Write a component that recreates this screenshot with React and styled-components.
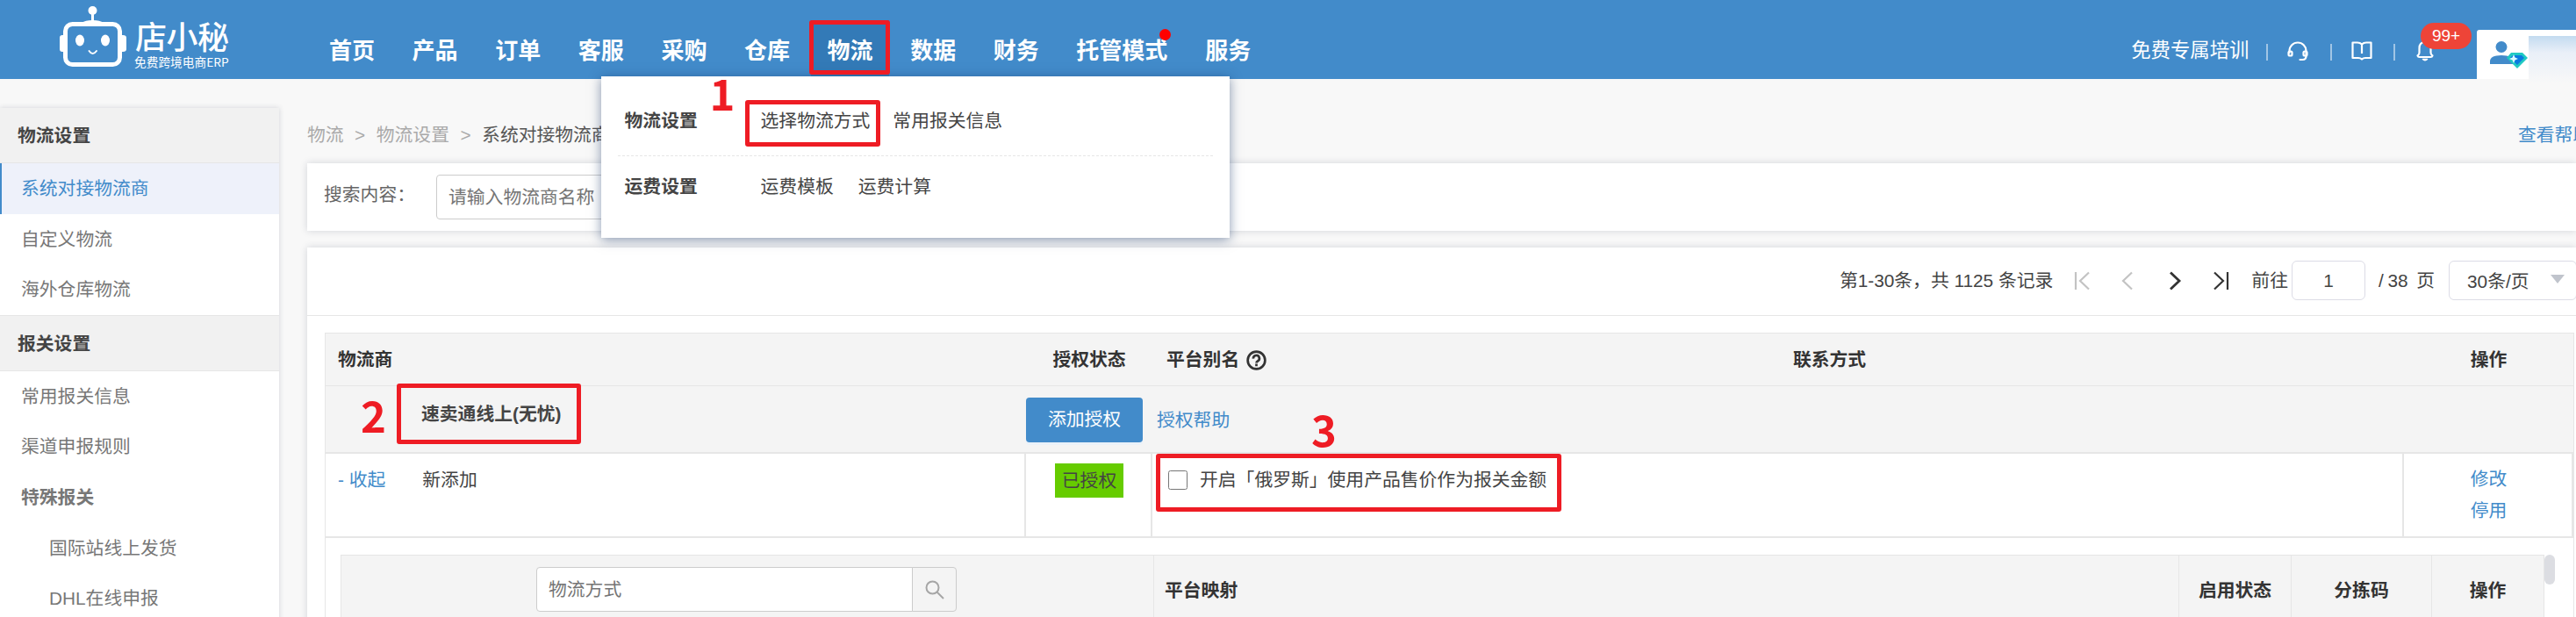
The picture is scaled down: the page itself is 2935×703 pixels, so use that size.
import React, { useState } from 'react';
import styled, { createGlobalStyle, css } from 'styled-components';

const GlobalStyle = createGlobalStyle`
  * {
    box-sizing: border-box;
  }

  body {
    margin: 0;
    background: #f8f8f8;
    overflow: hidden;
  }

  input, button {
    font: inherit;
  }
`;

const Page = styled.div`
  width: 2935px;
  height: 703px;
  overflow: hidden;
  background: #f8f8f8;
  color: #444;
  font-family: 'Liberation Sans', 'Noto Sans CJK SC', sans-serif;
  font-size: 20.8px;
  line-height: 30px;
  white-space: nowrap;
`;

/* red marks drawn over the screens of the guide */
const marked = css`
  &::after {
    content: '';
    position: absolute;
    inset: ${({ $inset }) => $inset};
    border: 5px solid #ee1c24;
    border-radius: 3px;
    pointer-events: none;
    z-index: 5;
  }
`;

const StepNumber = styled.span`
  position: absolute;
  left: ${({ $left }) => $left}px;
  top: ${({ $top }) => $top}px;
  color: #ee1c24;
  font-family: 'Noto Sans CJK SC', sans-serif;
  font-size: 49px;
  font-weight: 700;
  line-height: 50px;
  z-index: 6;
`;

const Header = styled.header`
  display: flex;
  height: 90px;
  padding-left: 66px;
  background: #428bca;
  color: #fff;
`;

const Logo = styled.div`
  display: flex;
  width: 288px;
  padding-top: 6px;
`;

const LogoText = styled.div`
  display: flex;
  flex-direction: column;
  margin-left: 8px;
  padding-top: 12px;
  font-family: 'Noto Sans CJK SC', sans-serif;
`;

const LogoName = styled.span`
  margin-left: 1px;
  font-size: 36px;
  font-weight: 500;
  line-height: 44px;
  letter-spacing: -0.5px;
`;

const LogoSlogan = styled.span`
  margin-top: -1px;
  font-size: 13.7px;
  line-height: 18px;
`;

const Nav = styled.nav`
  display: flex;
  height: 64px;
  margin-top: 23px;
`;

const NavItem = styled.div`
  position: relative;
  width: ${({ $wide }) => ($wide ? 147 : 94.6)}px;
  padding-left: 21px;
  font-size: 26px;
  font-weight: 700;
  line-height: 70px;
`;

const ActiveNavItem = styled(NavItem)`
  background: linear-gradient(#337ab7, #337ab7) 2px 0 / 89px 64px no-repeat;
  ${marked}
`;

const Dot = styled.i`
  position: absolute;
  top: 10px;
  right: 18px;
  width: 13px;
  height: 13px;
  border-radius: 50%;
  background: #f00;
`;

const Dropdown = styled.div`
  position: absolute;
  top: 64px;
  left: -237px;
  width: 716px;
  height: 184px;
  padding: 13px 19px 0;
  background: #fff;
  box-shadow: 0 2px 12px rgba(20, 50, 100, 0.5);
  color: #444;
  font-size: 20.8px;
  font-weight: 400;
  line-height: 75px;
  z-index: 4;
`;

const MenuRow = styled.div`
  display: flex;
  height: ${({ $last }) => ($last ? 70 : 78)}px;
  padding-left: 8px;
  border-bottom: ${({ $last }) => ($last ? 'none' : '1px dashed #e6e6e6')};
  line-height: ${({ $last }) => ($last ? 70 : 75)}px;
`;

const MenuTitle = styled.strong`
  width: 155px;
`;

const MenuLink = styled.span`
  position: relative;
  margin-right: ${({ $gap }) => $gap || 28}px;
  ${({ $inset }) => $inset && marked}
`;

const HeaderTools = styled.div`
  display: flex;
  align-items: center;
  margin-left: auto;
  padding-top: 25px;
  height: 90px;
  font-size: 22.4px;
`;

const Training = styled.span`
  margin-right: -5px;
`;

const Separator = styled.i`
  width: 2px;
  height: 19px;
  margin: 3px 22px 0 24.5px;
  background: rgba(255, 255, 255, 0.5);
`;

const BellBox = styled.span`
  position: relative;
  display: flex;
  width: 71px;
`;

const Badge = styled.span`
  position: absolute;
  left: 7px;
  top: -20px;
  width: 58px;
  height: 30px;
  border-radius: 15px;
  background: #ee4438;
  font-size: 19px;
  line-height: 30px;
  text-align: center;
`;

const Account = styled.div`
  display: flex;
  align-items: flex-start;
  width: 113px;
  height: 56px;
  margin-top: 34px;
  padding: 11px 0 0 14px;
  border-radius: 3px 0 0 0;
  background: #fff;
`;

const HiddenName = styled.div`
  flex: 1;
  height: 54px;
  margin-top: -4px;
  background: linear-gradient(#c3dbf0, #e9eff8 35%, #f8f8f8);
`;

const Body = styled.div`
  display: flex;
  align-items: flex-start;
`;

const Sidebar = styled.aside`
  width: 318px;
  height: 600px;
  margin-top: 33px;
  background: #fff;
  box-shadow: 0 0 6px rgba(40, 50, 80, 0.18);
`;

const SidebarTitle = styled.div`
  height: ${({ $first }) => ($first ? 63 : 64)}px;
  padding-left: 20px;
  border-top: ${({ $first }) => ($first ? 'none' : '1px solid #e6e6e6')};
  border-bottom: 1px solid #e6e6e6;
  background: #f1f1f1;
  font-weight: 700;
  line-height: 63px;
`;

const SidebarItem = styled.div`
  height: 57.6px;
  padding-left: ${({ $nested }) => ($nested ? 54 : 22)}px;
  border-left: 2px solid ${({ $active }) => ($active ? '#428bca' : 'transparent')};
  background: ${({ $active }) => ($active ? '#eef1fa' : 'none')};
  color: ${({ $active }) => ($active ? '#428bca' : '#777')};
  font-weight: ${({ $bold }) => ($bold ? 700 : 400)};
  line-height: 58px;
`;

const Main = styled.main`
  width: 2585px;
  margin-left: 32px;
`;

const Breadcrumb = styled.div`
  display: flex;
  gap: 12.5px;
  height: 96px;
  color: #aaa;
  line-height: 128px;
`;

const Current = styled.span`
  color: #555;
`;

const HelpLink = styled.a`
  width: 66px;
  margin-left: auto;
  color: #428bca;
`;

const Card = styled.section`
  background: #fff;
  box-shadow: 0 0 8px rgba(40, 50, 80, 0.18);
`;

const SearchCard = styled(Card)`
  display: flex;
  height: 77px;
  padding: 13px 20px 13px 19px;
  line-height: 45px;
  color: #666;
`;

const SearchLabel = styled.label`
  width: 128px;
`;

const SearchInput = styled.input`
  width: 420px;
  height: 51px;
  padding: 0 13px;
  border: 1px solid #ccc;
  border-radius: 4px;

  &::placeholder {
    color: #757575;
  }
`;

const ListCard = styled(Card)`
  height: 430px;
  margin-top: 19px;
`;

const Pager = styled.div`
  display: flex;
  align-items: center;
  justify-content: flex-end;
  height: 78px;
  padding-bottom: 2px;
  border-bottom: 1px solid #e6e6e6;
`;

const PagerIcon = styled.svg`
  width: 20px;
  height: 22px;
  margin-left: ${({ $first }) => ($first ? 23 : 0)}px;
  margin-right: ${({ $gap }) => $gap}px;
  fill: none;
  stroke: ${({ $disabled }) => ($disabled ? '#c3c3c3' : '#333')};
  stroke-width: 2.2;
`;

const PageInput = styled.input`
  width: 84px;
  height: 45px;
  margin: 0 15px 0 4px;
  border: 1px solid #dcdce6;
  border-radius: 6px;
  color: #444;
  text-align: center;
`;

const PageTotal = styled.span`
  word-spacing: -1px;
`;

const PageSize = styled.div`
  display: flex;
  align-items: center;
  justify-content: space-between;
  width: 146px;
  height: 45px;
  margin: 0 -1px 0 16px;
  padding: 3px 13px 0 20px;
  border: 1px solid #dcdce6;
  border-radius: 6px;
`;

const Caret = styled.i`
  margin-top: -6px;
  border: 8px solid transparent;
  border-top: 10px solid #c0c4cc;
  border-bottom: 0;
`;

const Table = styled.div`
  width: 2563px;
  height: 340px;
  margin: 19px 0 0 20px;
  border: 1px solid #e6e6e6;
`;

const Row = styled.div`
  display: grid;
  grid-template-columns: 798px 144px 1426px 193px;
`;

const HeadRow = styled(Row)`
  grid-template-columns: 798px 144px 145px 1281px 193px;
  height: 60px;
  border-bottom: 1px solid #e6e6e6;
  background: #f4f4f4;
  color: #333;
  font-weight: 700;
  line-height: 60px;
`;

const Head = styled.div`
  display: flex;
  align-items: center;
  justify-content: ${({ $left }) => ($left ? 'flex-start' : 'center')};
  gap: 8px;
  padding-left: ${({ $left }) => $left || 0}px;
  padding-right: ${({ $right }) => $right || 0}px;
`;

const CarrierRow = styled(Row)`
  height: 77px;
  border-bottom: 2px solid #e6e6e6;
  background: #f4f4f4;
`;

const CarrierName = styled.strong`
  position: relative;
  justify-self: start;
  align-self: start;
  margin: 17px 0 0 109px;
  ${marked}
`;

const AddButton = styled.button`
  width: 133px;
  height: 51px;
  margin: 13px 0 0 0;
  padding: 0 0 2px;
  border: none;
  border-radius: 4px;
  background: #428bca;
  box-shadow: 0 3px 0 #ebf2f9;
  color: #fff;
`;

const Link = styled.a`
  color: #428bca;
`;

const HelpCell = styled.div`
  position: relative;
  padding: 24px 0 0 5px;
`;

const AccountRow = styled(Row)`
  height: 96px;
  border-bottom: 2px solid #e6e6e6;
`;

const Cell = styled.div`
  padding: 15px 0 0 14px;
  border-right: 2px solid #e6e6e6;
`;

const ToggleCell = styled(Cell)`
  display: flex;
`;

const AccountName = styled.span`
  margin-left: 42px;
`;

const CenterCell = styled(Cell)`
  display: flex;
  flex-direction: column;
  align-items: center;
  padding: 11px 0 0 2px;
  line-height: 36px;
`;

const Authorized = styled.span`
  width: 78px;
  height: 39px;
  background: #6c0;
  line-height: 39px;
  text-align: center;
`;

const DeclareLabel = styled.label`
  position: relative;
  display: inline-flex;
  align-items: center;
  gap: 14px;
  padding-left: 4px;
  ${marked}
`;

const Checkbox = styled.input`
  width: 22px;
  height: 22px;
  margin: 0;
`;

const InnerTable = styled.div`
  display: grid;
  grid-template-columns: 927px 1168px 128px 160px 128px 12px;
  width: 2525px;
  height: 90px;
  margin: 19px 0 0 17px;
`;

const InnerHead = styled.div`
  padding-left: ${({ $left }) => $left || 0}px;
  border: solid #e6e6e6;
  border-width: 1px 1px 0 0;
  background: #f4f4f4;
  color: #333;
  font-weight: 700;
  line-height: 80px;
  text-align: ${({ $left }) => ($left ? 'left' : 'center')};
`;

const MethodHead = styled(InnerHead)`
  display: flex;
  padding: 13px 0 0 222px;
  border-left-width: 1px;
  font-weight: 400;
`;

const MethodInput = styled(SearchInput)`
  width: 429px;
  border-radius: 4px 0 0 4px;
`;

const MethodButton = styled.button`
  display: flex;
  align-items: center;
  justify-content: center;
  width: 51px;
  height: 51px;
  margin-left: -1px;
  border: 1px solid #ccc;
  border-radius: 0 4px 4px 0;
  background: #f4f4f4;
`;

const Scrollbar = styled.div`
  width: 12px;
  height: 34px;
  border-radius: 6px;
  background: #dcdde2;
`;

const RobotIcon = () => (
    <svg width="79" height="72" viewBox="0 0 79 72" fill="none">
        <circle cx="39.500" cy="6" r="5" fill="#fff" />
        <path d="M39.500 9v12" stroke="#fff" strokeWidth="3" />
        <path d="M27 20q4-3 12.500-3t12.500 3z" fill="#fff" />
        <rect x="8.500" y="21.500" width="62" height="46" rx="8" stroke="#fff" strokeWidth="5" />
        <path d="M7 34H5q-3 0-3 3v13q0 3 3 3h2zM72 34h2q4 0 4 3v13q0 3-4 3h-2z" fill="#fff" />
        <ellipse cx="25" cy="40" rx="5" ry="6.500" fill="#fff" />
        <ellipse cx="54" cy="40" rx="5" ry="6.500" fill="#fff" />
        <path d="M35.500 52q4 6 8.500 0" stroke="#fff" strokeWidth="2" strokeLinecap="round" />
    </svg>
);

const HeadsetIcon = () => (
    <svg width="24" height="24" viewBox="0 0 24 24" fill="none" stroke="#fff" strokeWidth="2.200">
        <path d="M2.500 14v-2a9.500 9.500 0 0 1 19 0v6q0 4-4 4h-3" strokeLinecap="round" />
        <rect x="1.500" y="12.500" width="4" height="5" rx="1.500" />
        <rect x="18.500" y="12.500" width="4" height="5" rx="1.500" />
    </svg>
);

const BookIcon = () => (
    <svg width="24" height="24" viewBox="0 0 24 24" fill="none" stroke="#fff" strokeWidth="2.200" strokeLinejoin="round">
        <path d="M12 4.500Q10 2.500 7 2.500H1.500v17.500H8q2.500 0 4 1.500q1.500-1.500 4-1.500h6.500V2.500H17q-3 0-5 2V15" />
    </svg>
);

const BellIcon = () => (
    <svg width="22" height="24" viewBox="0 0 22 24" fill="none" stroke="#fff" strokeWidth="2.200" strokeLinejoin="round">
        <path d="M12 2q6.500 0 6.500 7v5q0 2 2 3.500-.5 1.500-2 1.500h-13q-1.500 0-2-1.500 2-1.500 2-3.500V9q0-7 6.500-7z" />
        <path d="M9.500 21.500q2.500 2.500 5 0z" fill="#fff" strokeWidth="1.500" />
    </svg>
);

const MemberIcon = () => (
    <svg width="45" height="34" viewBox="0 0 45 34">
        <circle cx="14" cy="8.500" r="6.500" fill="#428bca" />
        <path d="M1 28v-3q0-7 13-7t13 7v3z" fill="#428bca" />
        <path d="M25 15h13l6 6-12 12-12-12z" fill="#1fc9c3" />
        <path d="M27 18h10l3 3-8 8-8-8z" fill="#0b7be0" />
        <path d="M28 17l1.500 3.500 3.500 1.500-3.500 1.500L28 27l-1.500-3.500L23 22l3.500-1.500z" fill="#d9fbff" />
    </svg>
);

const QuestionIcon = () => (
    <svg width="23" height="23" viewBox="0 0 24 24" fill="none" stroke="#333" strokeWidth="2.800">
        <circle cx="12" cy="12" r="10.300" />
        <path d="M8.300 10a3.600 3.600 0 1 1 5.200 3q-1.500.8-1.500 2.200M12 16.300v2.700" />
    </svg>
);

const SearchIcon = () => (
    <svg width="22" height="22" viewBox="0 0 22 22" fill="none" stroke="#a6a6a6" strokeWidth="2">
        <circle cx="8.500" cy="8.500" r="7" />
        <path d="M13.500 13.500l7.500 7.500" />
    </svg>
);

const navBefore = ['首页', '产品', '订单', '客服', '采购', '仓库'];
const navAfter = ['数据', '财务', '托管模式', '服务'];

const App = () => {
    const [page, setPage] = useState('1');

    return (
        <Page>
            <GlobalStyle />
            <Header>
                <Logo>
                    <RobotIcon />
                    <LogoText>
                        <LogoName>店小秘</LogoName>
                        <LogoSlogan>免费跨境电商ERP</LogoSlogan>
                    </LogoText>
                </Logo>
                <Nav>
                    {navBefore.map((item) => (
                        <NavItem key={item}>{item}</NavItem>
                    ))}
                    <ActiveNavItem $inset="0 2px 2px 0">
                        物流
                        <Dropdown>
                            <MenuRow>
                                <MenuTitle>物流设置</MenuTitle>
                                <MenuLink $gap={26} $inset="14px -12px 10px -18px">选择物流方式</MenuLink>
                                <MenuLink>常用报关信息</MenuLink>
                            </MenuRow>
                            <MenuRow $last>
                                <MenuTitle>运费设置</MenuTitle>
                                <MenuLink>运费模板</MenuLink>
                                <MenuLink>运费计算</MenuLink>
                            </MenuRow>
                            <StepNumber $left={124} $top={-7}>1</StepNumber>
                        </Dropdown>
                    </ActiveNavItem>
                    {navAfter.map((item) => (
                        <NavItem key={item} $wide={item.length > 2}>
                            {item}
                            {item === '托管模式' && <Dot />}
                        </NavItem>
                    ))}
                </Nav>
                <HeaderTools>
                    <Training>免费专属培训</Training>
                    <Separator />
                    <HeadsetIcon />
                    <Separator />
                    <BookIcon />
                    <Separator />
                    <BellBox>
                        <BellIcon />
                        <Badge>99+</Badge>
                    </BellBox>
                </HeaderTools>
                <Account>
                    <MemberIcon />
                    <HiddenName />
                </Account>
            </Header>

            <Body>
                <Sidebar>
                    <SidebarTitle $first>物流设置</SidebarTitle>
                    <SidebarItem $active>系统对接物流商</SidebarItem>
                    <SidebarItem>自定义物流</SidebarItem>
                    <SidebarItem>海外仓库物流</SidebarItem>
                    <SidebarTitle>报关设置</SidebarTitle>
                    <SidebarItem>常用报关信息</SidebarItem>
                    <SidebarItem>渠道申报规则</SidebarItem>
                    <SidebarItem $bold>特殊报关</SidebarItem>
                    <SidebarItem $nested>国际站线上发货</SidebarItem>
                    <SidebarItem $nested>DHL在线申报</SidebarItem>
                </Sidebar>

                <Main>
                    <Breadcrumb>
                        <span>物流</span>
                        <span>&gt;</span>
                        <span>物流设置</span>
                        <span>&gt;</span>
                        <Current>系统对接物流商</Current>
                        <HelpLink>查看帮助</HelpLink>
                    </Breadcrumb>

                    <SearchCard>
                        <SearchLabel>搜索内容：</SearchLabel>
                        <SearchInput placeholder="请输入物流商名称" />
                    </SearchCard>

                    <ListCard>
                        <Pager>
                            <span>第1-30条，共 1125 条记录</span>
                            <PagerIcon $first $disabled $gap={33} viewBox="0 0 20 22">
                                <path d="M3 1v20M18 1.500L8 11l10 9.500" />
                            </PagerIcon>
                            <PagerIcon $disabled $gap={34} viewBox="0 0 20 22">
                                <path d="M14 1.500L4 11l10 9.500" />
                            </PagerIcon>
                            <PagerIcon $gap={32} viewBox="0 0 20 22">
                                <path d="M4 1.500L14 11 4 20.500" strokeWidth="2.800" />
                            </PagerIcon>
                            <PagerIcon $gap={24} viewBox="0 0 20 22">
                                <path d="M2 1.500L12 11 2 20.500M17 1v20" />
                            </PagerIcon>
                            <span>前往</span>
                            <PageInput value={page} onChange={(e) => setPage(e.target.value)} />
                            <PageTotal>/ 38&nbsp; 页</PageTotal>
                            <PageSize>
                                30条/页
                                <Caret />
                            </PageSize>
                        </Pager>

                        <Table>
                            <HeadRow>
                                <Head $left={14}>物流商</Head>
                                <Head>授权状态</Head>
                                <Head $left={16}>
                                    平台别名
                                    <QuestionIcon />
                                </Head>
                                <Head $right={28}>联系方式</Head>
                                <Head>操作</Head>
                            </HeadRow>
                            <CarrierRow>
                                <CarrierName $inset="-20px -23px -19px -28px">
                                    速卖通线上(无忧)
                                    <StepNumber $left={-69} $top={-10}>2</StepNumber>
                                </CarrierName>
                                <AddButton>添加授权</AddButton>
                                <HelpCell>
                                    <Link>授权帮助</Link>
                                    <StepNumber $left={181} $top={23}>3</StepNumber>
                                </HelpCell>
                            </CarrierRow>
                            <AccountRow>
                                <ToggleCell>
                                    <Link>- 收起</Link>
                                    <AccountName>新添加</AccountName>
                                </ToggleCell>
                                <CenterCell>
                                    <Authorized>已授权</Authorized>
                                </CenterCell>
                                <Cell>
                                    <DeclareLabel $inset="-15px -17px -21px -10px">
                                        <Checkbox type="checkbox" />
                                        开启「俄罗斯」使用产品售价作为报关金额
                                    </DeclareLabel>
                                </Cell>
                                <CenterCell>
                                    <Link>修改</Link>
                                    <Link>停用</Link>
                                </CenterCell>
                            </AccountRow>
                            <InnerTable>
                                <MethodHead>
                                    <MethodInput placeholder="物流方式" />
                                    <MethodButton>
                                        <SearchIcon />
                                    </MethodButton>
                                </MethodHead>
                                <InnerHead $left={12}>平台映射</InnerHead>
                                <InnerHead>启用状态</InnerHead>
                                <InnerHead>分拣码</InnerHead>
                                <InnerHead>操作</InnerHead>
                                <Scrollbar />
                            </InnerTable>
                        </Table>
                    </ListCard>
                </Main>
            </Body>
        </Page>
    );
};

export default App;
